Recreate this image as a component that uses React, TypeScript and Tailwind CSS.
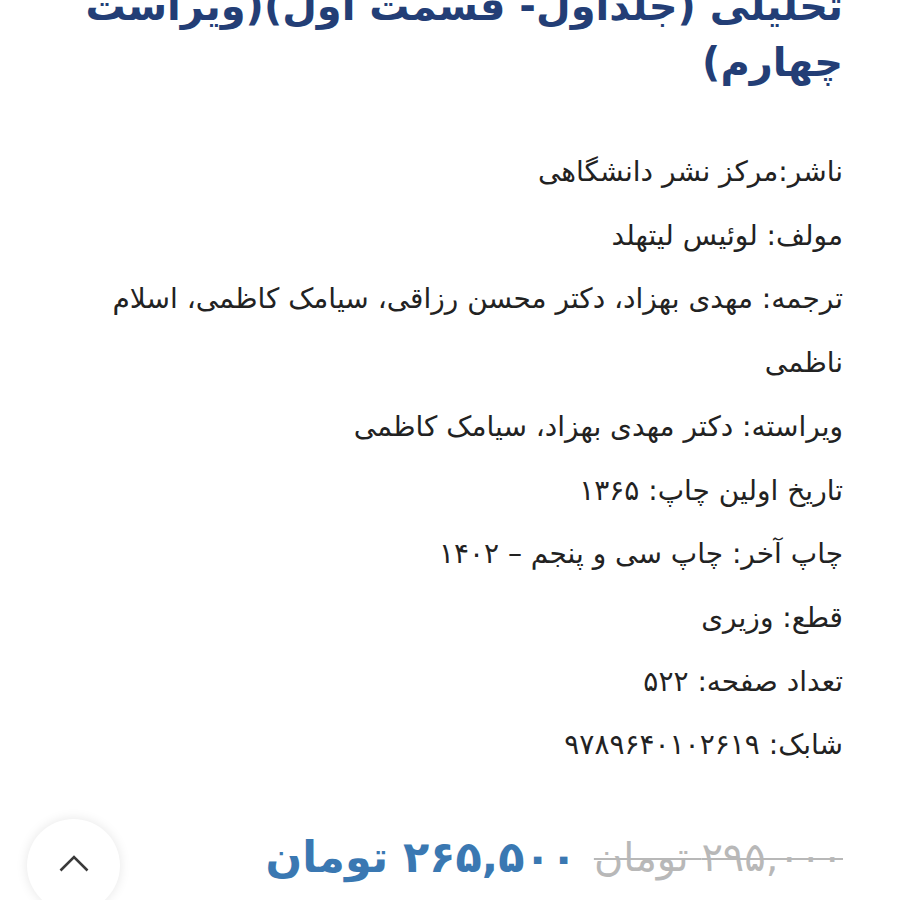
import React from 'react';

const details = [
  'ناشر:مرکز نشر دانشگاهی',
  'مولف: لوئیس لیتهلد',
  'ترجمه: مهدی بهزاد، دکتر محسن رزاقی، سیامک کاظمی، اسلام ناظمی',
  'ویراسته: دکتر مهدی بهزاد، سیامک کاظمی',
  'تاریخ اولین چاپ: ۱۳۶۵',
  'چاپ آخر: چاپ سی و پنجم – ۱۴۰۲',
  'قطع: وزیری',
  'تعداد صفحه: ۵۲۲',
  'شابک: ۹۷۸۹۶۴۰۱۰۲۶۱۹',
];

export default function App() {
  return (
    <div className="relative h-[900px] w-[900px] overflow-hidden bg-white">
      <div dir="rtl" className="px-[57px] font-['DejaVu_Sans',sans-serif]">
        {/* عنوان کتاب */}
        <h1 className="mt-[-78px] text-[40px] font-bold leading-[56px] text-[#233e76]">
          حساب دیفرانسیل و انتگرال و هندسه
          <br />
          تحلیلی (جلداول- قسمت اول)(ویراست
          <br />
          چهارم)
        </h1>

        <div className="mt-[50px] text-[28px] leading-[63.7px] text-[#222222]">
          {details.map((line) => (
            <p key={line}>{line}</p>
          ))}
        </div>

        {/* قیمت */}
        <div className="mt-[48px] flex items-center gap-[17px]">
          <span className="text-[40px] text-[#b8b8b8] line-through decoration-[2px]">
            ۲۹۵,۰۰۰ تومان
          </span>
          <span className="text-[43px] font-bold text-[#3a78b2]">۲۶۵,۵۰۰ تومان</span>
        </div>
      </div>

      <button className="absolute bottom-[-12px] left-[27px] flex h-[93px] w-[93px] items-center justify-center rounded-full bg-white shadow-[0_0_12px_rgba(0,0,0,0.1)]">
        <svg width="30" height="18" viewBox="0 0 30 18" fill="none" className="mb-[6px]">
          <polyline points="1.5,16.5 15,3 28.5,16.5" stroke="#3a3a3a" strokeWidth="2.6" />
        </svg>
      </button>
    </div>
  );
}
